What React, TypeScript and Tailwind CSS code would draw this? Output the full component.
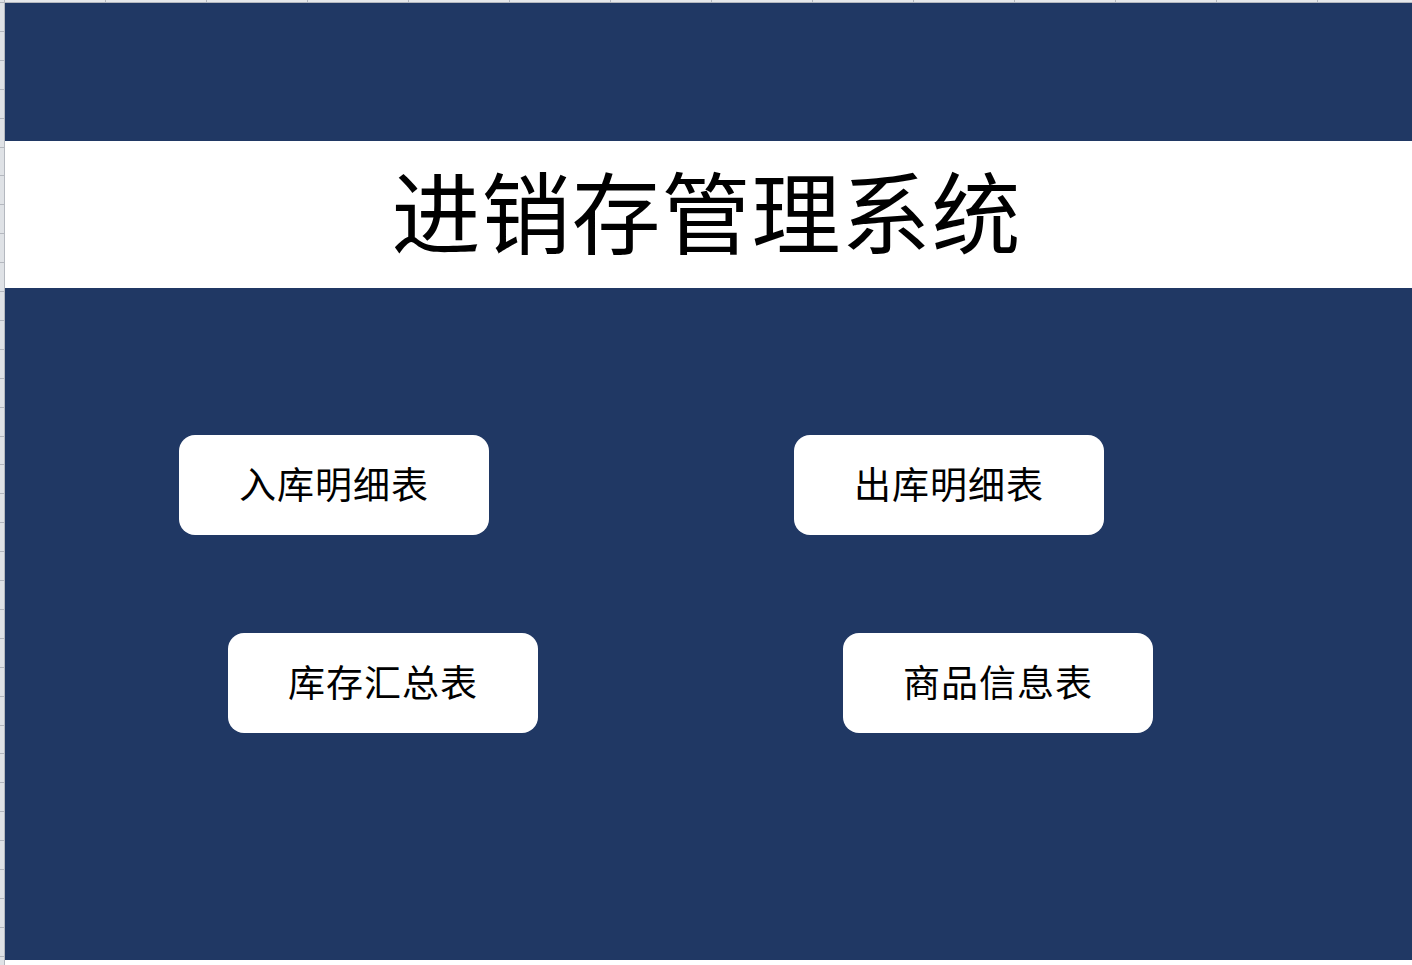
import React from "react";

const colStops = [105, 206, 307, 408, 509, 610, 711, 812, 913, 1014, 1115, 1216, 1317];
const rowStops = Array.from({ length: 34 }, (_, i) => 2 + Math.round(i * 28.9));

function MenuButton({ label }: { label: string }) {
  return (
    <button className="flex h-[100px] w-[310px] items-center justify-center rounded-[16px] bg-white pb-[4px] text-[37px] leading-none text-black tracking-[1px]">
      {label}
    </button>
  );
}

export default function App() {
  return (
    <div
      className="relative h-[965px] w-[1412px] overflow-hidden bg-white"
      style={{ fontFamily: '"Noto Sans CJK SC", "Noto Sans", sans-serif' }}
    >
      {/* column header strip */}
      <div className="absolute left-0 top-0 h-[3px] w-full border-b border-[#b4b8bf] bg-[#e6e8eb]">
        {colStops.map((x) => (
          <div key={x} className="absolute top-0 h-[2px] w-px bg-[#b4b8bf]" style={{ left: x }} />
        ))}
      </div>
      {/* row header strip */}
      <div className="absolute left-0 top-0 h-full w-[5px] border-r border-[#b4b8bf] bg-[#dfe2e6]">
        {rowStops.map((y) => (
          <div key={y} className="absolute left-0 h-px w-[4px] bg-[#b4b8bf]" style={{ top: y }} />
        ))}
      </div>

      {/* sheet content */}
      <div className="ml-[5px] mt-[3px] flex h-[957px] w-[1407px] flex-col bg-[#203864]">
        <div className="h-[138px]" />
        <div className="flex h-[147px] items-center justify-center bg-white pb-[12px]">
          <h1 className="ml-[-4px] text-[89px] font-normal leading-none tracking-[1px] text-black">
            进销存管理系统
          </h1>
        </div>
        <div className="flex flex-col pt-[147px]">
          <div className="flex gap-[305px] pl-[174px]">
            <MenuButton label="入库明细表" />
            <MenuButton label="出库明细表" />
          </div>
          <div className="mt-[98px] flex gap-[305px] pl-[223px]">
            <MenuButton label="库存汇总表" />
            <MenuButton label="商品信息表" />
          </div>
        </div>
      </div>
    </div>
  );
}
